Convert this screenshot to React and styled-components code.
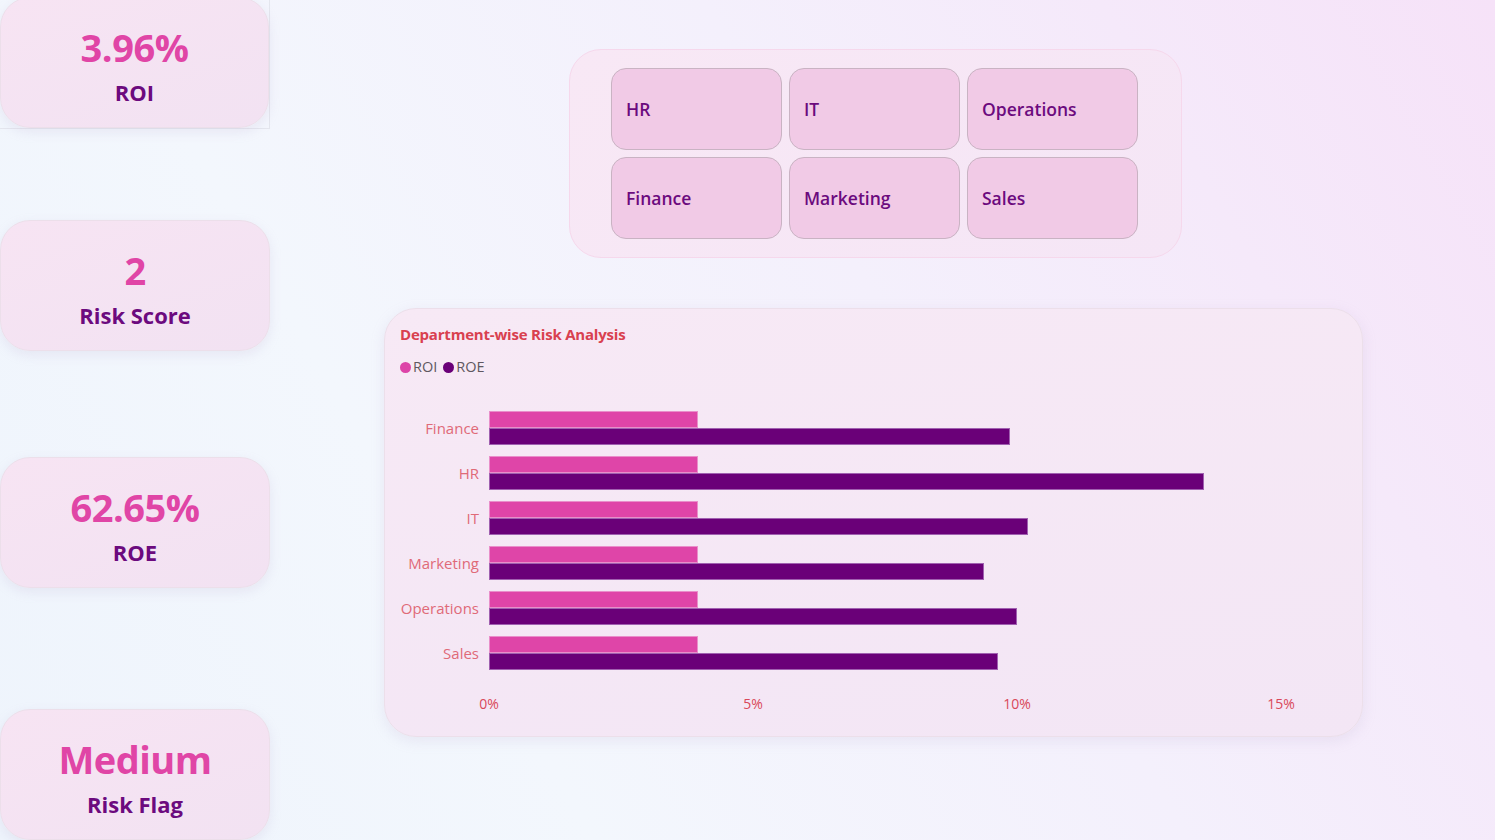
import styled, { createGlobalStyle } from 'styled-components';

const PX_PER_PCT = 52.8;

const kpis = [
	{ value: '3.96%', label: 'ROI', offset: -3, framed: true },
	{ value: '2', label: 'Risk Score', offset: 91 },
	{ value: '62.65%', label: 'ROE', offset: 106 },
	{ value: 'Medium', label: 'Risk Flag', offset: 121 },
];

const departments = ['HR', 'IT', 'Operations', 'Finance', 'Marketing', 'Sales'];

const rows = [
	{ name: 'Finance', roi: 3.96, roe: 9.87 },
	{ name: 'HR', roi: 3.96, roe: 13.54 },
	{ name: 'IT', roi: 3.96, roe: 10.2 },
	{ name: 'Marketing', roi: 3.96, roe: 9.37 },
	{ name: 'Operations', roi: 3.96, roe: 10.0 },
	{ name: 'Sales', roi: 3.96, roe: 9.64 },
];

const ticks = [0, 5, 10, 15];

const GlobalStyle = createGlobalStyle`
	html, body {
		margin: 0;
		height: 840px;
		overflow: hidden;
	}
	body {
		font-family: 'Open Sans', 'Noto Sans', sans-serif;
		background: linear-gradient(240deg, #f6e2f8 0%, #f4f0fc 40%, #f3f7fd 70%, #eef4fc 100%);
	}
`;

const Page = styled.div`
	display: flex;
	height: 840px;
`;

const KpiColumn = styled.div`
	width: 270px;
	display: flex;
	flex-direction: column;
	flex-shrink: 0;
`;

const KpiSlot = styled.div`
	margin-top: ${({ $offset }) => $offset}px;
	${({ $framed }) =>
		$framed &&
		`
		border-right: 1px solid #e4e6ee;
		border-bottom: 1px solid #e4e6ee;
	`}
`;

const KpiCard = styled.div`
	height: 131px;
	box-sizing: border-box;
	border-radius: 30px;
	background: linear-gradient(160deg, #f7e4f3 0%, #f2e2f2 100%);
	border: 1px solid #ecdfea;
	box-shadow: 0 4px 12px rgba(180, 160, 200, 0.18);
	display: flex;
	flex-direction: column;
	align-items: center;
	justify-content: center;
	gap: 8px;
	padding-top: 4px;
`;

const KpiValue = styled.div`
	font-size: 38px;
	font-weight: 700;
	color: #e045a6;
	line-height: 46px;
	letter-spacing: -0.5px;
`;

const KpiLabel = styled.div`
	font-size: 22px;
	font-weight: 700;
	color: #6c0a7e;
	line-height: 28px;
`;

const Main = styled.div`
	flex: 1;
	display: flex;
	flex-direction: column;
	padding-top: 49px;
`;

const SlicerPanel = styled.div`
	margin-left: 299px;
	width: 613px;
	box-sizing: border-box;
	padding: 18px 44px 18px 41px;
	border-radius: 32px;
	background: linear-gradient(135deg, #f8e8f5 0%, #f5e6f6 100%);
	border: 1px solid #f6d8ec;
`;

const SlicerGrid = styled.div`
	display: grid;
	grid-template-columns: repeat(3, 171px);
	grid-auto-rows: 82px;
	gap: 7px;
`;

const SlicerButton = styled.div`
	box-sizing: border-box;
	border-radius: 15px;
	border: 1px solid #c9b3c3;
	background: #f1cae6;
	display: flex;
	align-items: center;
	padding-left: 14px;
	font-size: 17.5px;
	font-weight: 600;
	color: #6c0a7e;
`;

const ChartCard = styled.div`
	margin-top: 50px;
	margin-left: 114px;
	width: 979px;
	height: 429px;
	box-sizing: border-box;
	border-radius: 32px;
	background: linear-gradient(170deg, #f7e9f5 0%, #f3e6f5 100%);
	border: 1px solid #ecdfea;
	box-shadow: 0 4px 14px rgba(180, 160, 200, 0.18);
	padding: 15px 15px 0;
	display: flex;
	flex-direction: column;
`;

const ChartTitle = styled.div`
	font-size: 15px;
	font-weight: 700;
	color: #d9404f;
	line-height: 20px;
	letter-spacing: -0.2px;
`;

const Legend = styled.div`
	display: flex;
	align-items: center;
	gap: 6px;
	margin-top: 14px;
	font-size: 14.5px;
	color: #605860;
	line-height: 18px;
`;

const LegendItem = styled.span`
	display: flex;
	align-items: center;
	gap: 2px;

	&::before {
		content: '';
		width: 11px;
		height: 11px;
		border-radius: 50%;
		background: ${({ $color }) => $color};
	}
`;

const Plot = styled.div`
	margin-top: 29px;
	display: flex;
	flex-direction: column;
`;

const BarRow = styled.div`
	display: flex;
	align-items: center;
	height: 45px;
`;

const CategoryLabel = styled.div`
	width: 79px;
	padding-right: 10px;
	text-align: right;
	font-size: 15px;
	font-weight: 500;
	color: #e06a78;
	flex-shrink: 0;
`;

const Bars = styled.div`
	display: flex;
	flex-direction: column;
`;

const Bar = styled.div`
	height: 17px;
	box-sizing: border-box;
	background: ${({ $color }) => $color};
	border: 1px solid ${({ $edge }) => $edge};
`;

const Axis = styled.div`
	position: relative;
	margin-left: 89px;
	margin-top: 19px;
	height: 20px;
`;

const Tick = styled.span`
	position: absolute;
	top: 0;
	transform: translateX(-50%);
	font-size: 14px;
	font-weight: 500;
	color: #d9485a;
	white-space: nowrap;
`;

export default function App() {
	return (
		<>
			<GlobalStyle />
			<Page>
				<KpiColumn>
					{kpis.map(({ value, label, offset, framed }) => (
						<KpiSlot key={label} $offset={offset} $framed={framed}>
							<KpiCard>
								<KpiValue>{value}</KpiValue>
								<KpiLabel>{label}</KpiLabel>
							</KpiCard>
						</KpiSlot>
					))}
				</KpiColumn>

				<Main>
					<SlicerPanel>
						<SlicerGrid>
							{departments.map((d) => (
								<SlicerButton key={d}>{d}</SlicerButton>
							))}
						</SlicerGrid>
					</SlicerPanel>

					<ChartCard>
						<ChartTitle>Department-wise Risk Analysis</ChartTitle>
						<Legend>
							<LegendItem $color="#dd44a8">ROI</LegendItem>
							<LegendItem $color="#6a0078">ROE</LegendItem>
						</Legend>
						<Plot>
							{rows.map(({ name, roi, roe }) => (
								<BarRow key={name}>
									<CategoryLabel>{name}</CategoryLabel>
									<Bars>
										<Bar
											$color="#df45a8"
											$edge="#e98fca"
											style={{ width: roi * PX_PER_PCT }}
										/>
										<Bar
											$color="#6a0078"
											$edge="#a060b0"
											style={{ width: roe * PX_PER_PCT }}
										/>
									</Bars>
								</BarRow>
							))}
						</Plot>
						<Axis>
							{ticks.map((t) => (
								<Tick key={t} style={{ left: t * PX_PER_PCT }}>
									{t}%
								</Tick>
							))}
						</Axis>
					</ChartCard>
				</Main>
			</Page>
		</>
	);
}
